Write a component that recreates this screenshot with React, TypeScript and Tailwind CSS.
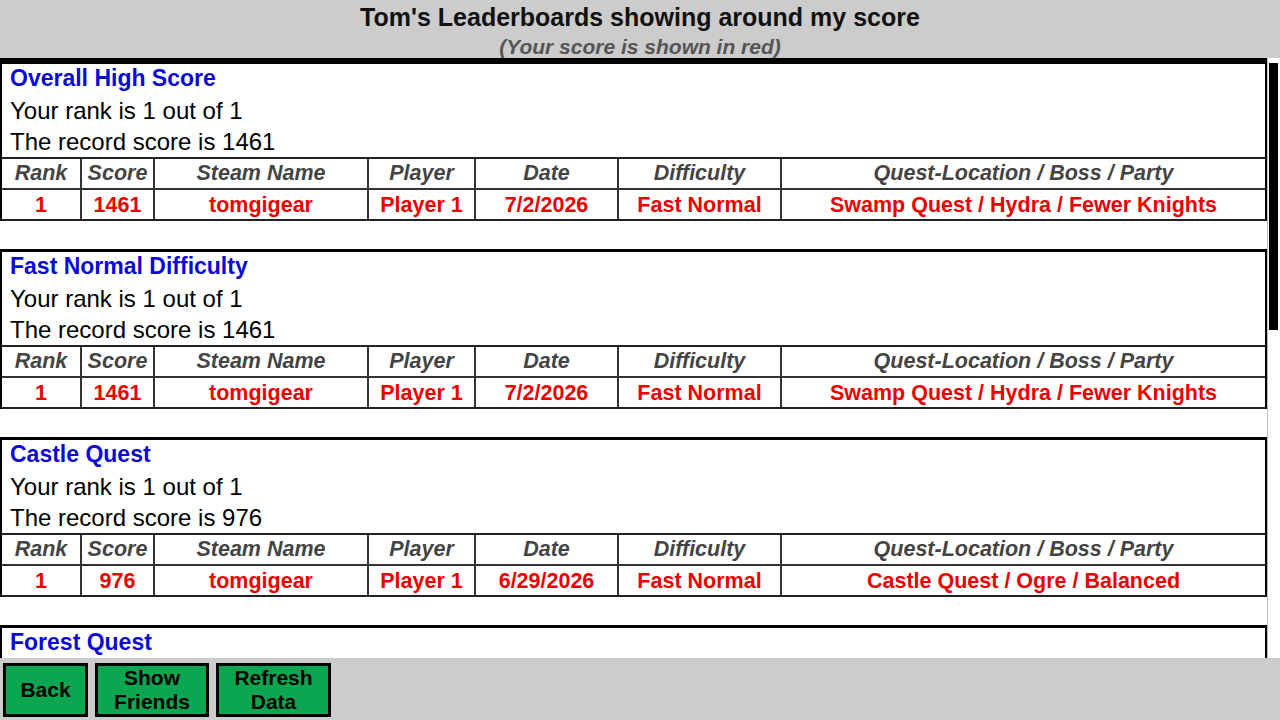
import React from "react";

interface ScoreRow {
  rank: string;
  score: string;
  steamName: string;
  player: string;
  date: string;
  difficulty: string;
  quest: string;
}

interface Board {
  id: number;
  title: string;
  rank: number;
  total: number;
  record: number;
  rows: ScoreRow[];
}

const columns = [
  "Rank",
  "Score",
  "Steam Name",
  "Player",
  "Date",
  "Difficulty",
  "Quest-Location / Boss / Party",
];

const swampRun: ScoreRow = {
  rank: "1",
  score: "1461",
  steamName: "tomgigear",
  player: "Player 1",
  date: "7/2/2026",
  difficulty: "Fast Normal",
  quest: "Swamp Quest / Hydra / Fewer Knights",
};

const boards: Board[] = [
  { id: 1, title: "Overall High Score", rank: 1, total: 1, record: 1461, rows: [swampRun] },
  { id: 2, title: "Fast Normal Difficulty", rank: 1, total: 1, record: 1461, rows: [swampRun] },
  {
    id: 3,
    title: "Castle Quest",
    rank: 1,
    total: 1,
    record: 976,
    rows: [
      {
        rank: "1",
        score: "976",
        steamName: "tomgigear",
        player: "Player 1",
        date: "6/29/2026",
        difficulty: "Fast Normal",
        quest: "Castle Quest / Ogre / Balanced",
      },
    ],
  },
  { id: 4, title: "Forest Quest", rank: 1, total: 1, record: 812, rows: [] },
];

const gridCols = "grid grid-cols-[78px_73px_214px_107px_143px_163px_1fr]";

function BoardSection({ board }: { board: Board }) {
  return (
    <div className="mb-[28px]">
      <div className="border-x-2 border-t-[3px] border-black bg-white">
        {/* Heading lines */}
        <div className="pl-[8px]">
          <div className="text-[23px] leading-[29px] pb-[2px] font-bold text-[#0a0ad8]">{board.title}</div>
          <div className="text-[24px] leading-[31px] text-black">
            Your rank is {board.rank} out of {board.total}
          </div>
          <div className="text-[24px] leading-[31px] text-black">
            The record score is {board.record}
          </div>
        </div>

        {/* Score table */}
        {board.rows.length > 0 && (
          <div className="border-y-2 border-[#222] text-[21.5px] leading-[24px] font-bold">
            <div className={`${gridCols} h-[29px]`}>
              {columns.map((col, i) => (
                <div
                  key={col}
                  className={`h-full flex items-center justify-center pb-[2px] italic text-[#444] ${
                    i > 0 ? "border-l-2 border-[#333]" : ""
                  }`}
                >
                  {col}
                </div>
              ))}
            </div>
            {board.rows.map((row) => {
              const cells = [
                row.rank,
                row.score,
                row.steamName,
                row.player,
                row.date,
                row.difficulty,
                row.quest,
              ];
              return (
                <div key={row.rank} className={`${gridCols} h-[31px] border-t-2 border-[#333]`}>
                  {cells.map((cell, i) => (
                    <div
                      key={i}
                      className={`h-full flex items-center justify-center text-[#ec0000] ${
                        i > 0 ? "border-l-2 border-[#333]" : ""
                      }`}
                    >
                      {cell}
                    </div>
                  ))}
                </div>
              );
            })}
          </div>
        )}
      </div>
    </div>
  );
}

function GreenButton({ children, width }: { children: React.ReactNode; width: string }) {
  return (
    <button
      className={`${width} h-[54px] bg-[#0ca650] border-[3px] border-black text-black font-bold text-[21px] leading-[24px] text-center`}
    >
      {children}
    </button>
  );
}

export default function App() {
  return (
    <div className="w-[1280px] h-[720px] flex flex-col bg-[#cccccc] overflow-hidden font-['Liberation_Sans',Arial,sans-serif]">
      {/* Header */}
      <div className="h-[58px] shrink-0 text-center">
        <div className="pt-[2px] text-[25px] leading-[30px] font-bold text-[#111]">
          Tom&apos;s Leaderboards showing around my score
        </div>
        <div className="pt-[3px] text-[21px] leading-[24px] font-bold italic text-[#555]">
          (Your score is shown in red)
        </div>
      </div>

      {/* Scrolling board list */}
      <div className="h-[600px] shrink-0 flex">
        <div className="flex-1 bg-white border-t-[3px] border-black overflow-hidden">
          {boards.map((board) => (
            <BoardSection key={board.id} board={board} />
          ))}
        </div>
        <div className="w-[13px] bg-white border-l border-[#bbb] pt-[5px] pl-[1px] pr-[2px]">
          <div className="h-[267px] bg-black" />
        </div>
      </div>

      {/* Footer buttons */}
      <div className="flex-1 flex items-start gap-[7px] pl-[3px] pt-[5px]">
        <GreenButton width="w-[85px]">Back</GreenButton>
        <GreenButton width="w-[114px]">
          Show
          <br />
          Friends
        </GreenButton>
        <GreenButton width="w-[115px]">
          Refresh
          <br />
          Data
        </GreenButton>
      </div>
    </div>
  );
}
